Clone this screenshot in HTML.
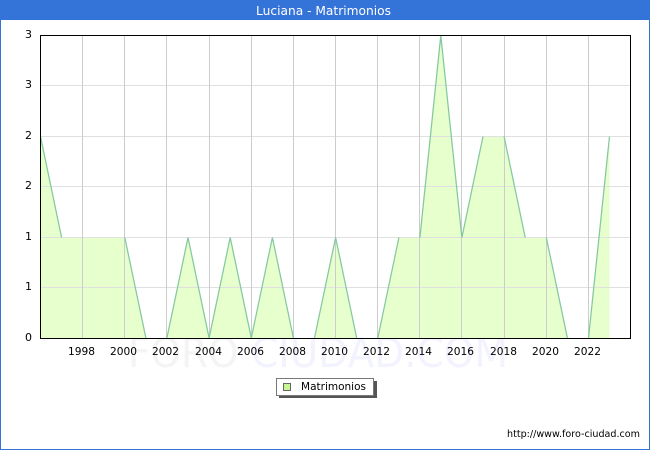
<!DOCTYPE html>
<html>
<head>
<meta charset="utf-8">
<style>
html,body{margin:0;padding:0;background:#fff;width:650px;height:450px;overflow:hidden}
svg{display:block}
text{font-family:"DejaVu Sans",sans-serif}
</style>
</head>
<body>
<svg width="650" height="450" viewBox="0 0 650 450" xmlns="http://www.w3.org/2000/svg">
<rect width="650" height="450" fill="#fff"/>
<text x="128" y="367" font-size="41" textLength="380" lengthAdjust="spacingAndGlyphs"><tspan fill="#f4f4f4">FORO </tspan><tspan fill="#f3f3ff">CIUDAD.COM</tspan></text>
<rect x="0" y="0" width="650" height="20" fill="#3473d8"/>
<rect x="0" y="0" width="1" height="450" fill="#3473d8"/>
<rect x="649" y="0" width="1" height="450" fill="#3473d8"/>
<rect x="0" y="449" width="650" height="1" fill="#3473d8"/>
<text x="256" y="15" font-size="12" fill="#fff" textLength="135" lengthAdjust="spacingAndGlyphs">Luciana - Matrimonios</text>
<rect x="41" y="36" width="589" height="302" fill="#fff" fill-opacity="0.6"/>
<polygon fill="#e6ffcc" points="40.5,136.5 61.6,237.5 124.8,237.5 145.9,338 166.9,338 188,237.5 209.1,338 230.2,237.5 251.3,338 272.4,237.5 293.4,338 314.5,338 335.6,237.5 356.7,338 377.8,338 398.9,237.5 419.9,237.5 440.8,35.5 461.9,237.5 483,136.5 504.1,136.5 525.2,237.5 546.3,237.5 567.4,338 588.5,338 609.5,136.5 609.5,338 40.5,338"/>
<g shape-rendering="crispEdges" fill="#e0e0e0">
<rect x="41" y="85" width="589" height="1"/>
<rect x="41" y="136" width="589" height="1"/>
<rect x="41" y="186" width="589" height="1"/>
<rect x="41" y="237" width="589" height="1"/>
<rect x="41" y="287" width="589" height="1"/>
</g>
<g shape-rendering="crispEdges" fill="#cccccc">
<rect x="82" y="36" width="1" height="302"/>
<rect x="124" y="36" width="1" height="302"/>
<rect x="166" y="36" width="1" height="302"/>
<rect x="209" y="36" width="1" height="302"/>
<rect x="251" y="36" width="1" height="302"/>
<rect x="293" y="36" width="1" height="302"/>
<rect x="335" y="36" width="1" height="302"/>
<rect x="377" y="36" width="1" height="302"/>
<rect x="419" y="36" width="1" height="302"/>
<rect x="461" y="36" width="1" height="302"/>
<rect x="504" y="36" width="1" height="302"/>
<rect x="546" y="36" width="1" height="302"/>
<rect x="588" y="36" width="1" height="302"/>
</g>
<path fill="none" stroke="#84c8a0" stroke-width="1.25" d="M40.5 136.5L61.6 237.5M124.8 237.5L145.9 338M166.9 338L188 237.5L209.1 338L230.2 237.5L251.3 338L272.4 237.5L293.4 338M314.5 338L335.6 237.5L356.7 338M377.8 338L398.9 237.5M419.9 237.5L440.8 35.5L461.9 237.5L483 136.5M504.1 136.5L525.2 237.5M546.3 237.5L567.4 338M588.5 338L609.5 136.5"/>
<g shape-rendering="crispEdges" fill="#000">
<rect x="40" y="35" width="591" height="1"/>
<rect x="40" y="338" width="591" height="1"/>
<rect x="40" y="35" width="1" height="304"/>
<rect x="630" y="35" width="1" height="304"/>
</g>
<g font-size="11" fill="#000" text-anchor="end">
<text x="32" y="38">3</text>
<text x="32" y="88">3</text>
<text x="32" y="139">2</text>
<text x="32" y="189">2</text>
<text x="32" y="240">1</text>
<text x="32" y="290">1</text>
<text x="32" y="341">0</text>
</g>
<g font-size="11" fill="#000">
<text x="68" y="355" textLength="27" lengthAdjust="spacingAndGlyphs">1998</text>
<text x="110" y="355" textLength="27" lengthAdjust="spacingAndGlyphs">2000</text>
<text x="152" y="355" textLength="27" lengthAdjust="spacingAndGlyphs">2002</text>
<text x="195" y="355" textLength="27" lengthAdjust="spacingAndGlyphs">2004</text>
<text x="237" y="355" textLength="27" lengthAdjust="spacingAndGlyphs">2006</text>
<text x="279" y="355" textLength="27" lengthAdjust="spacingAndGlyphs">2008</text>
<text x="321" y="355" textLength="27" lengthAdjust="spacingAndGlyphs">2010</text>
<text x="363" y="355" textLength="27" lengthAdjust="spacingAndGlyphs">2012</text>
<text x="405" y="355" textLength="27" lengthAdjust="spacingAndGlyphs">2014</text>
<text x="447" y="355" textLength="27" lengthAdjust="spacingAndGlyphs">2016</text>
<text x="490" y="355" textLength="27" lengthAdjust="spacingAndGlyphs">2018</text>
<text x="532" y="355" textLength="27" lengthAdjust="spacingAndGlyphs">2020</text>
<text x="574" y="355" textLength="27" lengthAdjust="spacingAndGlyphs">2022</text>
</g>
<g shape-rendering="crispEdges">
<rect x="279" y="381" width="98" height="17" fill="#555"/>
<rect x="276.5" y="378.5" width="97" height="17" fill="#fff" stroke="#777" stroke-width="1"/>
<rect x="283.5" y="383.5" width="7" height="7" fill="#c8f596" stroke="#666" stroke-width="1"/>
</g>
<text x="301" y="390" font-size="11" fill="#000" textLength="65" lengthAdjust="spacingAndGlyphs">Matrimonios</text>
<text x="507" y="437" font-size="9.5" fill="#000" textLength="133" lengthAdjust="spacingAndGlyphs">http://www.foro-ciudad.com</text>
</svg>
</body>
</html>
